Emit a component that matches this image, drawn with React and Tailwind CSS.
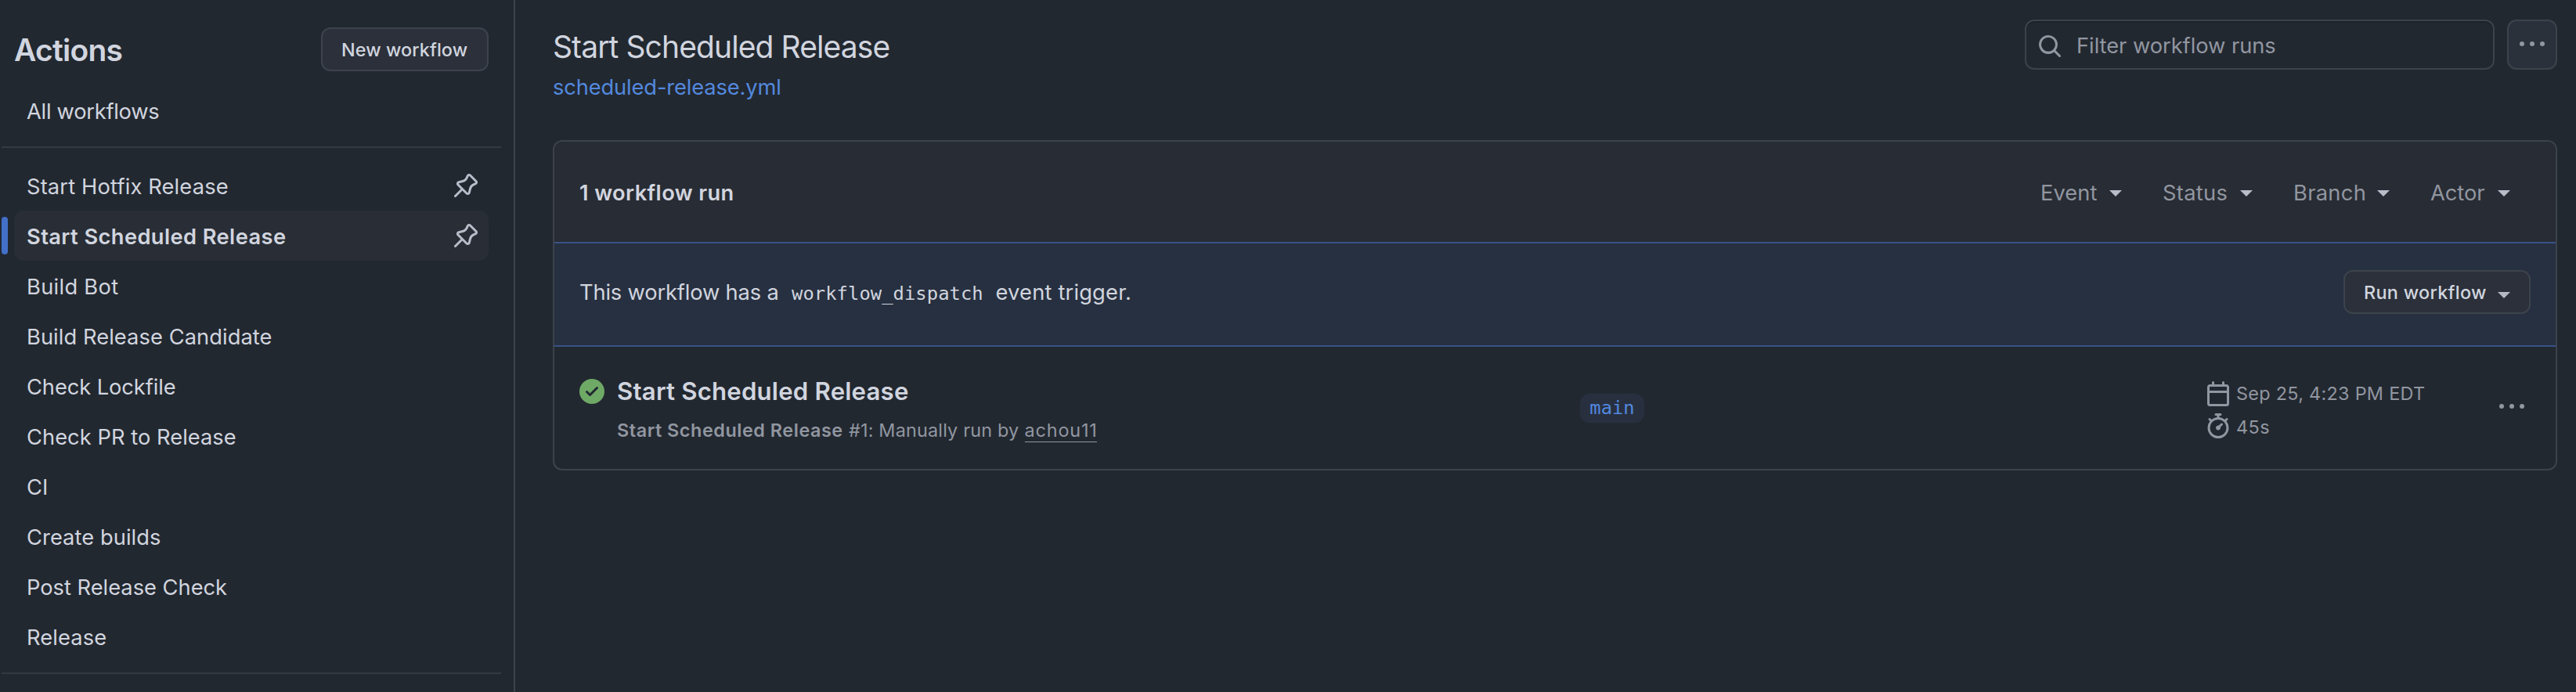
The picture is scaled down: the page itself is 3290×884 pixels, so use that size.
const icons = {
  pin: "m11.294.984 3.722 3.722a1.75 1.75 0 0 1-.504 2.826l-1.327.613a3.089 3.089 0 0 0-1.707 2.084l-.584 2.454c-.317 1.332-1.972 1.8-2.94.832L5.75 11.311 1.78 15.28a.749.749 0 1 1-1.06-1.06l3.969-3.97-2.204-2.204c-.968-.968-.5-2.623.832-2.94l2.454-.584a3.08 3.08 0 0 0 2.084-1.707l.613-1.327a1.75 1.75 0 0 1 2.826-.504ZM6.283 9.723l2.732 2.731a.25.25 0 0 0 .42-.119l.584-2.454a4.586 4.586 0 0 1 2.537-3.098l1.328-.613a.25.25 0 0 0 .072-.404l-3.722-3.722a.25.25 0 0 0-.404.072l-.613 1.328a4.584 4.584 0 0 1-3.098 2.537l-2.454.584a.25.25 0 0 0-.119.42l2.731 2.732Z",
  search: "M10.68 11.74a6 6 0 0 1-7.922-8.982 6 6 0 0 1 8.982 7.922l3.04 3.04a.749.749 0 0 1-.326 1.275.749.749 0 0 1-.734-.215ZM11.5 7a4.499 4.499 0 1 0-8.997 0A4.499 4.499 0 0 0 11.5 7Z",
  kebab: "M8 9a1.5 1.5 0 1 0 0-3 1.5 1.5 0 0 0 0 3ZM1.5 9a1.5 1.5 0 1 0 0-3 1.5 1.5 0 0 0 0 3Zm13 0a1.5 1.5 0 1 0 0-3 1.5 1.5 0 0 0 0 3Z",
  check: "M8 16A8 8 0 1 1 8 0a8 8 0 0 1 0 16Zm3.78-9.72a.751.751 0 0 0-.018-1.042.751.751 0 0 0-1.042-.018L6.75 9.19 5.28 7.72a.751.751 0 0 0-1.042.018.751.751 0 0 0-.018 1.042l2 2a.75.75 0 0 0 1.06 0Z",
  calendar: "M4.75 0a.75.75 0 0 1 .75.75V2h5V.75a.75.75 0 0 1 1.5 0V2h1.25c.966 0 1.75.784 1.75 1.75v10.5A1.75 1.75 0 0 1 13.25 16H2.75A1.75 1.75 0 0 1 1 14.25V3.75C1 2.784 1.784 2 2.75 2H4V.75A.75.75 0 0 1 4.75 0ZM2.5 7.5v6.75c0 .138.112.25.25.25h10.5a.25.25 0 0 0 .25-.25V7.5Zm10.75-4H2.75a.25.25 0 0 0-.25.25V6h11V3.75a.25.25 0 0 0-.25-.25Z",
  stopwatch: "M5.75.75A.75.75 0 0 1 6.5 0h3a.75.75 0 0 1 0 1.5h-.75v1l-.001.041a6.724 6.724 0 0 1 3.464 1.435l.007-.006.75-.75a.749.749 0 0 1 1.275.326.749.749 0 0 1-.215.734l-.75.75-.006.007a6.75 6.75 0 1 1-10.548 0L2.72 5.03l-.75-.75a.751.751 0 0 1 .018-1.042.751.751 0 0 1 1.042-.018l.75.75.007.006A6.72 6.72 0 0 1 7.25 2.541V1.5H6.5a.75.75 0 0 1-.75-.75ZM8 14.5a5.25 5.25 0 1 0-.001-10.501A5.25 5.25 0 0 0 8 14.5Zm.389-6.7 1.33-1.33a.75.75 0 1 1 1.061 1.06L9.45 8.861A1.503 1.503 0 0 1 8 10.75a1.499 1.499 0 1 1 .389-2.95Z",
};

function Icon({ name, className = "" }) {
  return (
    <svg viewBox="0 0 16 16" className={`size-8 shrink-0 fill-current ${className}`} aria-hidden="true">
      <path d={icons[name]} />
    </svg>
  );
}

function Caret({ className = "" }) {
  return (
    <svg viewBox="0 0 16 8" className={`h-2 w-4 shrink-0 fill-current ${className}`} aria-hidden="true">
      <path d="M0 0H16L8 8Z" />
    </svg>
  );
}

const workflows = [
  { name: "Start Hotfix Release", tracking: "tracking-[0.14px]", pinned: true },
  { name: "Start Scheduled Release", tracking: "tracking-[0.39px]", pinned: true, selected: true },
  { name: "Build Bot", tracking: "tracking-[0.29px]" },
  { name: "Build Release Candidate", tracking: "tracking-[0.06px]" },
  { name: "Check Lockfile", tracking: "tracking-[-0.09px]" },
  { name: "Check PR to Release", tracking: "tracking-[0.03px]" },
  { name: "CI", tracking: "tracking-[0.1px]" },
  { name: "Create builds", tracking: "tracking-[0.06px]" },
  { name: "Post Release Check", tracking: "tracking-[-0.02px]" },
  { name: "Release", tracking: "tracking-[0.1px]" },
];

const filters = [
  { name: "Event", box: "w-[88px] tracking-[0.05px]" },
  { name: "Status", box: "w-[99px] tracking-[0.28px]" },
  { name: "Branch", box: "w-[107px] tracking-[0.3px]" },
  { name: "Actor", box: "w-[86px] tracking-[-0.05px]" },
];

function NavItem({ name, tracking, pinned, selected }) {
  return (
    <li className="flex h-16 items-center pl-0.5">
      <span className={`h-12 w-2 rounded-full ${selected ? "bg-[#4270c8]" : ""}`} />
      <a
        className={`ml-2 flex h-16 w-[606px] items-center justify-between rounded-xl pr-[13px] pl-4 ${
          selected ? "bg-[#292e36] font-semibold" : ""
        }`}
      >
        <span className={`pt-1 text-[27.3px] leading-10 ${tracking}`}>{name}</span>
        {pinned && <Icon name="pin" className="text-[#b9bdca]" />}
      </a>
    </li>
  );
}

function Sidebar() {
  return (
    <aside className="h-[884px] w-[658px] shrink-0 border-r-2 border-[#3d434c]">
      <div className="flex items-center justify-between pt-[35px] pr-8 pl-[18px]">
        <h2 className="pt-0.5 text-[39px] leading-[50px] font-semibold tracking-[-0.75px]">Actions</h2>
        <button className="flex h-14 w-[214px] items-center rounded-xl border-2 border-[#3d434c] bg-[#2b303a] pt-px pl-6 text-[23.4px] font-medium tracking-[0.08px] whitespace-nowrap">
          New workflow
        </button>
      </div>
      <ul className="pt-[18px]">
        <NavItem name="All workflows" tracking="tracking-[-0.28px]" />
      </ul>
      <hr className="mt-3.5 mr-4 mb-4 ml-0.5 border-t-2 border-[#343a43]" />
      <ul>
        {workflows.map((w) => (
          <NavItem key={w.name} {...w} />
        ))}
      </ul>
      <hr className="mt-3.5 mr-4 ml-0.5 border-t-2 border-[#343a43]" />
    </aside>
  );
}

function PageHeader() {
  return (
    <header className="flex h-[179px] items-start justify-between pt-[25px]">
      <div className="pt-[5px]">
        <h1 className="text-[39px] leading-[60px] font-normal tracking-[-0.9px]">Start Scheduled Release</h1>
        <a className="block pt-px text-[27.3px] leading-[42px] tracking-[-0.14px] text-[#5388de]">scheduled-release.yml</a>
      </div>
      <div className="flex gap-4">
        <div className="flex h-16 w-[600px] items-center rounded-xl border-2 border-[#3d434c] pl-3.5 text-[#9196a0] shadow-[inset_0_2px_0_#1d2129]">
          <Icon name="search" className="mt-1" />
          <span className="pt-1 pl-[18px] text-[27.3px] leading-10 tracking-[-0.05px]">Filter workflow runs</span>
        </div>
        <button className="flex size-16 items-center justify-center rounded-xl border-2 border-[#3d434c] bg-[#2b313b] text-[#9196a0]">
          <Icon name="kebab" />
        </button>
      </div>
    </header>
  );
}

function RunsPanel() {
  return (
    <section className="overflow-hidden rounded-xl border-2 border-[#3d434c]">
      <div className="flex h-32 items-center justify-between bg-[#282c34] pt-1 pr-[58px] pl-8 text-[27.3px] leading-10">
        <strong className="font-semibold tracking-[0.38px]">1 workflow run</strong>
        <div className="flex gap-[52px] text-[#9196a0]">
          {filters.map((f) => (
            <div key={f.name} className="flex items-center">
              <span className={f.box}>{f.name}</span>
              <Caret className="text-[#b9bdca]" />
            </div>
          ))}
        </div>
      </div>

      <div className="flex h-[134px] items-start justify-between border-y-2 border-[#385286] bg-[#273040] pt-[34px] pr-8 pl-8">
        <p className="flex items-baseline pt-[9px] text-[27.3px] leading-10">
          <span className="w-[271px] tracking-[-0.17px]">This workflow has a</span>
          <code className="w-[260.5px] font-['DejaVu_Sans_Mono',monospace] text-[23.8px] tracking-[0.07px]">workflow_dispatch</code>
          <span className="tracking-[0.18px]">event trigger.</span>
        </p>
        <button className="flex h-14 w-[239px] items-center justify-between rounded-xl border-2 border-[#3d434c] bg-[#2b303a] px-6 pt-px text-[23.4px] font-medium tracking-[0.3px] whitespace-nowrap">
          Run workflow
          <Caret className="mt-1.5 text-[#b5b9c3]" />
        </button>
      </div>

      <div className="flex h-[156px] items-start">
        <div className="flex w-[1310px] gap-4 pt-[33px] pl-8">
          <Icon name="check" className="mt-2 text-[#6ea966]" />
          <div>
            <h3 className="text-[31.2px] leading-[48px] font-semibold tracking-[0.18px]">Start Scheduled Release</h3>
            <p className="mt-2 flex items-start text-[23.4px] leading-9 text-[#9196a0]">
              <span className="w-[296px] font-semibold tracking-[0.54px]">Start Scheduled Release</span>
              <span className="w-[224.5px] tracking-[0.18px]">#1: Manually run by</span>
              <a className="h-[33px] w-[92px] border-b border-[#9196a0] tracking-[0.85px]">achou11</a>
            </p>
          </div>
        </div>
        <div className="w-[799px] pt-[60px]">
          <span className="flex h-[37px] w-[82px] items-center justify-center rounded-xl bg-[#283040] font-['DejaVu_Sans_Mono',monospace] text-[23.8px] text-[#5388de]">
            main
          </span>
        </div>
        <div className="flex w-[375px] flex-col gap-[9px] pt-11 text-[23.4px] leading-8 text-[#9196a0]">
          <div className="flex gap-[7px]">
            <Icon name="calendar" />
            <span className="tracking-[0.29px]">Sep 25, 4:23 PM EDT</span>
          </div>
          <div className="flex gap-[7px]">
            <Icon name="stopwatch" />
            <span className="pt-0.5 tracking-[0.5px]">45s</span>
          </div>
        </div>
        <Icon name="kebab" className="mt-[61px] text-[#9196a0]" />
      </div>
    </section>
  );
}

export default function App() {
  return (
    <div className="flex h-[884px] overflow-hidden bg-[#222830] font-[Inter,sans-serif] text-[#d1d5df]">
      <Sidebar />
      <main className="min-w-0 flex-1 pr-6 pl-12">
        <PageHeader />
        <RunsPanel />
      </main>
    </div>
  );
}
